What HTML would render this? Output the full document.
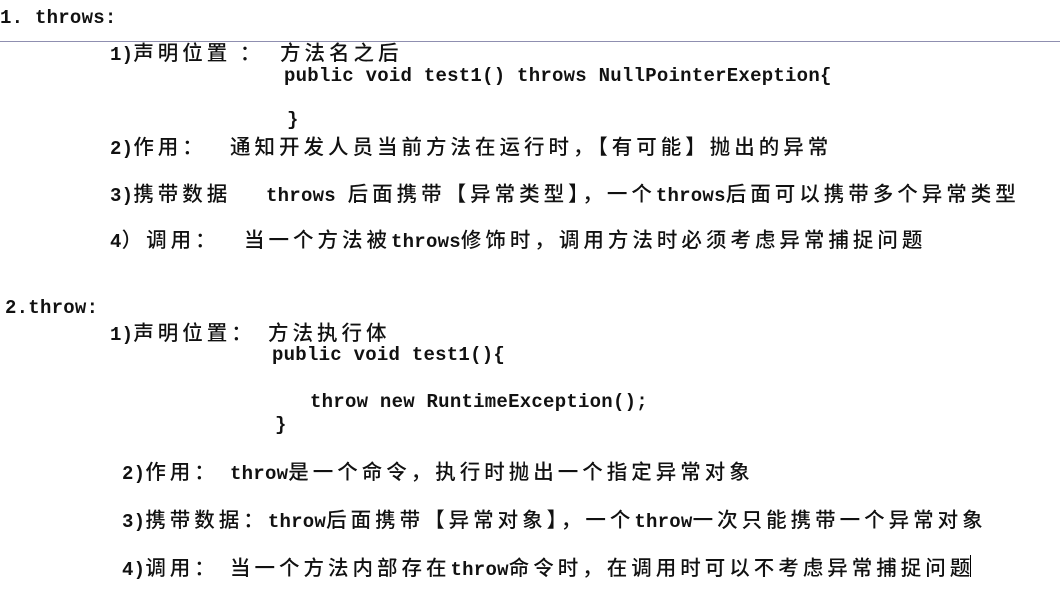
<!DOCTYPE html>
<html><head><meta charset="utf-8"><style>
html,body{margin:0;padding:0;background:#fff;width:1060px;height:590px;overflow:hidden;position:relative}
.l{position:absolute;white-space:pre;font-family:"Liberation Mono","Noto Sans CJK SC",monospace;font-weight:bold;font-size:19px;letter-spacing:0.25px;color:#111;line-height:24px;transform:translateY(-12px)}
.c{font-family:"Noto Sans CJK SC","WenQuanYi Zen Hei",sans-serif;font-weight:500;font-size:20.5px;letter-spacing:4px}
.hr{position:absolute;left:0;top:41px;width:1060px;height:1px;background:#8f8fb0}
.cur{position:absolute;left:970px;top:555px;width:1px;height:22px;background:#000}
</style></head><body>
<div class="l" style="left:0;top:18px">1. throws:</div>
<div class="hr"></div>
<div class="l" style="left:110px;top:51px">1)<span class="c">声明位置 ：</span></div>
<div class="l" style="left:280px;top:51px"><span class="c">方法名之后</span></div>
<div class="l" style="left:284px;top:76px">public void test1() throws NullPointerExeption{</div>
<div class="l" style="left:287px;top:120px">}</div>
<div class="l" style="left:110px;top:145px">2)<span class="c">作用：</span></div>
<div class="l" style="left:230px;top:145px"><span class="c">通知开发人员当前方法在运行时，【有可能】抛出的异常</span></div>
<div class="l" style="left:110px;top:192px">3)<span class="c">携带数据</span></div>
<div class="l" style="left:266px;top:192px">throws <span class="c">后面携带【异常类型】，一个</span>throws<span class="c">后面可以携带多个异常类型</span></div>
<div class="l" style="left:110px;top:238px">4<span class="c">）调用：</span></div>
<div class="l" style="left:244px;top:238px"><span class="c">当一个方法被</span>throws<span class="c">修饰时，调用方法时必须考虑异常捕捉问题</span></div>
<div class="l" style="left:5px;top:308px">2.throw:</div>
<div class="l" style="left:110px;top:331px">1)<span class="c">声明位置：</span></div>
<div class="l" style="left:268px;top:331px"><span class="c">方法执行体</span></div>
<div class="l" style="left:272px;top:355px">public void test1(){</div>
<div class="l" style="left:310px;top:402px">throw new RuntimeException();</div>
<div class="l" style="left:275px;top:425px">}</div>
<div class="l" style="left:122px;top:470px">2)<span class="c">作用：</span></div>
<div class="l" style="left:230px;top:470px">throw<span class="c">是一个命令，执行时抛出一个指定异常对象</span></div>
<div class="l" style="left:122px;top:518px">3)<span class="c">携带数据：</span>throw<span class="c">后面携带【异常对象】，一个</span>throw<span class="c">一次只能携带一个异常对象</span></div>
<div class="l" style="left:122px;top:566px">4)<span class="c">调用：</span></div>
<div class="l" style="left:230px;top:566px"><span class="c">当一个方法内部存在</span>throw<span class="c">命令时，在调用时可以不考虑异常捕捉问题</span></div>
<div class="cur"></div>
</body></html>
